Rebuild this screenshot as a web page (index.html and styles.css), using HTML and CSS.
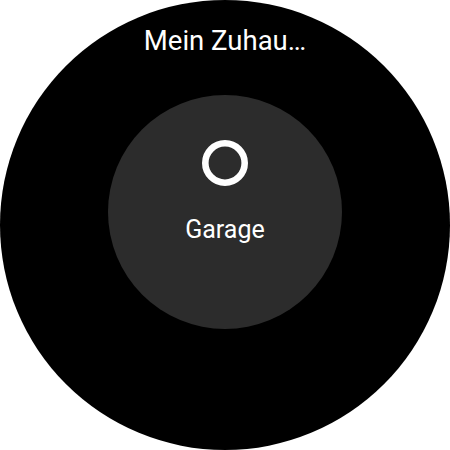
FILE: index.html
```html
<!DOCTYPE html>
<html>
<head>
<meta charset="utf-8">
<link rel="stylesheet" href="styles.css">
</head>
<body>
<div class="screen">
  <div class="title">Mein Zuhau…</div>
  <div class="tile">
    <svg class="icon" width="46" height="46" viewBox="0 0 46 46">
      <circle cx="23" cy="23" r="19.7" fill="none" stroke="#ffffff" stroke-width="6.6"/>
    </svg>
    <div class="label">Garage</div>
  </div>
</div>
</body>
</html>
```
FILE: styles.css
```css
html, body {
  margin: 0;
  padding: 0;
  background: #ffffff;
}
.screen {
  width: 450px;
  height: 450px;
  border-radius: 50%;
  background: #000000;
  overflow: hidden;
  display: flex;
  flex-direction: column;
  align-items: center;
  font-family: Roboto, "Noto Sans", sans-serif;
  color: #ffffff;
}
.title {
  padding-top: 25px;
  font-size: 27.5px;
  line-height: 32px;
  height: 32px;
}
.tile {
  margin-top: 38px;
  width: 234px;
  height: 234px;
  border-radius: 50%;
  background: #2c2c2c;
  display: flex;
  flex-direction: column;
  align-items: center;
}
.icon {
  display: block;
  margin-top: 45px;
}
.label {
  margin-top: 30px;
  font-size: 25px;
  line-height: 28px;
}
```
